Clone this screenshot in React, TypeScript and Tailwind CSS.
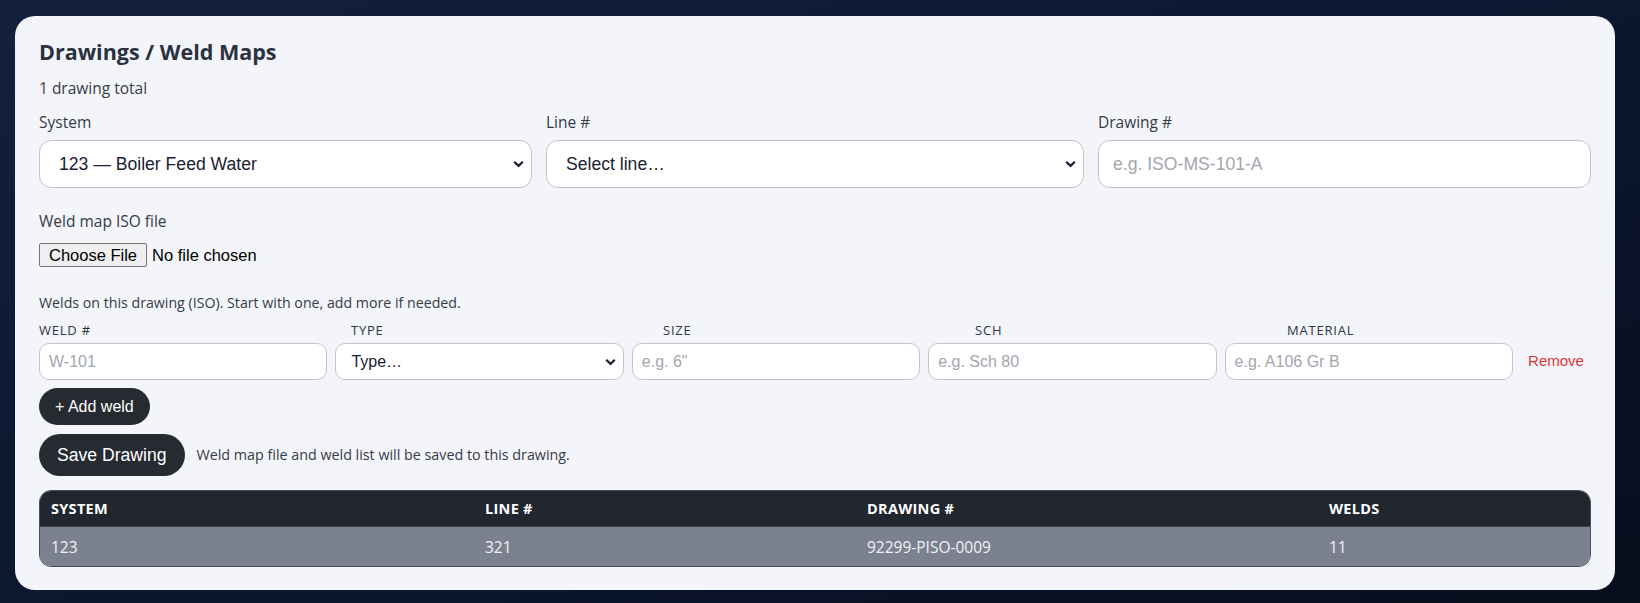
import React from "react";

const sans = "font-['Open_Sans','Noto_Sans',sans-serif]";
const ctl = "font-['Liberation_Sans',Arial,sans-serif]";

function Chevron() {
  return (
    <svg
      width="11"
      height="7"
      viewBox="0 0 11 7"
      className="pointer-events-none absolute right-[8px] top-1/2 -translate-y-1/2"
    >
      <path d="M1.2 1.2 5.5 5.4 9.8 1.2" fill="none" stroke="#1b2133" strokeWidth="2.2" />
    </svg>
  );
}

function Select({ value, big }: { value: string; big?: boolean }) {
  return (
    <div className="relative">
      <select
        defaultValue={value}
        className={
          big
            ? `${ctl} h-12 w-full appearance-none rounded-[12px] border border-[#c3c4c9] bg-white pl-[19px] pr-8 text-[17.6px] text-[#1b2133] outline-none`
            : `${ctl} h-[37px] w-full appearance-none rounded-[10px] border border-[#c3c4c9] bg-white pl-[15px] pr-8 text-[16px] text-[#1b2133] outline-none`
        }
      >
        <option>{value}</option>
      </select>
      <Chevron />
    </div>
  );
}

function Field({ placeholder }: { placeholder: string }) {
  return (
    <input
      placeholder={placeholder}
      className={`${ctl} h-[37px] w-full rounded-[10px] border border-[#c3c4c9] bg-white px-[9px] text-[16px] text-[#1b2133] outline-none placeholder:text-[#a3a6ae]`}
    />
  );
}

const weldCols = ["Weld #", "Type", "Size", "Sch", "Material"];

const drawings = [{ system: "123", line: "321", drawing: "92299-PISO-0009", welds: 11 }];

export default function App() {
  return (
    <div
      className={`${sans} min-h-screen bg-linear-to-br from-[#13213f] via-[#0c1730] to-[#070e1d] pb-[14px] pl-[15px] pr-[25px] pt-4`}
    >
      <div className="rounded-[20px] bg-[#f3f5fa] px-6 pb-[23px] pt-[21px] text-[#353b47]">
        <h1 className="text-[21.5px] font-bold leading-[30px] text-[#2a3140]">Drawings / Weld Maps</h1>
        <p className="mt-[11px] text-[15.5px] leading-5">1 drawing total</p>

        {/* system / line / drawing */}
        <div className="mt-[14px] grid grid-cols-[493px_538px_493px] gap-x-[14px]">
          <div>
            <div className="text-[15.5px] leading-5">System</div>
            <div className="mt-2">
              <Select value="123 — Boiler Feed Water" big />
            </div>
          </div>
          <div>
            <div className="text-[15.5px] leading-5">Line #</div>
            <div className="mt-2">
              <Select value="Select line…" big />
            </div>
          </div>
          <div>
            <div className="text-[15.5px] leading-5">Drawing #</div>
            <input
              placeholder="e.g. ISO-MS-101-A"
              className={`${ctl} mt-2 h-12 w-full rounded-[12px] border border-[#c3c4c9] bg-white px-[14px] text-[17.6px] outline-none placeholder:text-[#a3a6ae]`}
            />
          </div>
        </div>

        {/* file */}
        <div className="mt-[23px] text-[15.5px] leading-5">Weld map ISO file</div>
        <div className={`${ctl} mt-3 flex h-6 items-center text-[16.5px] text-black`}>
          <span className="flex h-6 items-center rounded-[2px] border border-[#767676] bg-[#efefef] px-[9px]">
            Choose File
          </span>
          <span className="ml-[5px]">No file chosen</span>
        </div>

        {/* welds */}
        <p className="mt-[27px] text-[14.2px] leading-[18px]">
          Welds on this drawing (ISO). Start with one, add more if needed.
        </p>
        <div className="mt-[10px] grid grid-cols-5 gap-x-2 text-[13px] uppercase leading-4 tracking-[0.06em] text-[#2f3642]">
          {weldCols.map((c) => (
            <div key={c}>{c}</div>
          ))}
        </div>
        <div className="mt-[5px] grid grid-cols-[repeat(5,1fr)_70px] items-center gap-x-2">
          <Field placeholder="W-101" />
          <Select value="Type…" />
          <Field placeholder={'e.g. 6"'} />
          <Field placeholder="e.g. Sch 80" />
          <Field placeholder="e.g. A106 Gr B" />
          <button className={`${ctl} text-center text-[15px] text-[#dc3535]`}>Remove</button>
        </div>

        <button
          className={`${ctl} mt-2 block h-[37px] rounded-full bg-[#262a31] px-4 text-[16px] text-white`}
        >
          + Add weld
        </button>
        <div className="mt-[9px] flex items-center">
          <button
            className={`${ctl} h-[42px] rounded-full bg-[#262a31] px-[18px] text-[17.6px] text-white`}
          >
            Save Drawing
          </button>
          <span className="ml-[12px] text-[14.3px] text-[#353b47]">
            Weld map file and weld list will be saved to this drawing.
          </span>
        </div>

        {/* table */}
        <div className="mt-[14px] overflow-hidden rounded-[12px] border border-[#4a4f5a]">
          <div className="grid h-[35px] grid-cols-[434px_382px_462px_1fr] items-center bg-[#22262f] text-[14.5px] font-bold uppercase tracking-[0.02em] text-white">
            <div className="px-[11px]">System</div>
            <div className="px-[11px]">Line #</div>
            <div className="px-[11px]">Drawing #</div>
            <div className="px-[11px]">Welds</div>
          </div>
          {drawings.map((d) => (
            <div
              key={d.drawing}
              className="grid h-[40px] grid-cols-[434px_382px_462px_1fr] items-center border-t border-[#3d424c] bg-[#7c8190] pt-[2px] text-[15.5px] text-[#f1f2f5]"
            >
              <div className="px-[11px]">{d.system}</div>
              <div className="px-[11px]">{d.line}</div>
              <div className="px-[11px]">{d.drawing}</div>
              <div className="px-[11px]">{d.welds}</div>
            </div>
          ))}
        </div>
      </div>
    </div>
  );
}
